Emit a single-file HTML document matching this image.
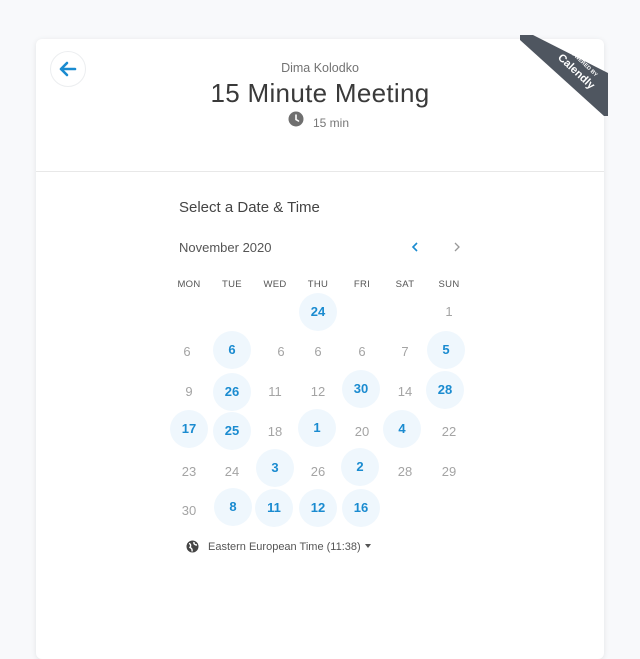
<!DOCTYPE html>
<html><head><meta charset="utf-8"><style>
*{margin:0;padding:0;box-sizing:border-box}
body{width:640px;height:640px;background:#f8f9fb;font-family:"Liberation Sans",sans-serif;position:relative;overflow:hidden}
.card{position:absolute;left:36px;top:39px;width:568px;height:620px;background:#fff;border-radius:6px;box-shadow:0 1px 6px rgba(0,0,0,.09)}
.t{position:absolute;white-space:nowrap}
.c{position:absolute;width:38px;height:38px;margin:-19px 0 0 -19px;border-radius:50%;text-align:center;line-height:38px;font-size:13px;color:#a4a4a4}
.c.a{background:#eff7fd;color:#1a8bd0;font-weight:bold}
.h{position:absolute;width:40px;margin-left:-20px;text-align:center;font-size:9.5px;color:#555;letter-spacing:.3px}
</style></head><body>
<div class="card"></div>
<div style="position:absolute;left:36px;top:171px;width:568px;height:1px;background:#e8e8e8"></div>
<div style="position:absolute;left:50px;top:51px;width:36px;height:36px;border-radius:50%;border:1px solid #eceef0;background:#fff"></div>
<svg style="position:absolute;left:57px;top:58px" width="22" height="22" viewBox="0 0 22 22"><path d="M18 11H4M10 5L4 11L10 17" stroke="#1a8bd0" stroke-width="2.6" fill="none" stroke-linecap="round" stroke-linejoin="round"/></svg>
<svg style="position:absolute;left:0;top:0" width="640" height="140"><polygon points="520,35 533,35 608,73 608,116 604,116 520,40" fill="#4f5660"/>
<text x="0" y="0" transform="translate(582,64) rotate(43)" fill="#fff" font-size="5.5" font-weight="bold" text-anchor="middle" font-family="Liberation Sans">POWERED BY</text>
<text x="0" y="0" transform="translate(574,74) rotate(43)" fill="#fff" font-size="11" font-weight="bold" text-anchor="middle" font-family="Liberation Sans">Calendly</text></svg>
<div class="t" style="left:0;width:640px;text-align:center;top:61px;font-size:12.5px;color:#737373">Dima Kolodko</div>
<div class="t" style="left:0;width:640px;text-align:center;top:78px;font-size:26px;color:#3a3a3a;letter-spacing:.3px">15 Minute Meeting</div>
<svg style="position:absolute;left:288px;top:111px" width="16" height="16" viewBox="0 0 16 16"><circle cx="8" cy="8" r="7.5" fill="#6f6f6f"/><path d="M8 4V8.5L10.5 10" stroke="#fff" stroke-width="1.6" fill="none" stroke-linecap="round"/></svg>
<div class="t" style="left:313px;top:116px;font-size:12px;color:#777">15 min</div>
<div class="t" style="left:179px;top:199px;font-size:15px;color:#444">Select a Date &amp; Time</div>
<div class="t" style="left:179px;top:240px;font-size:13px;color:#555">November 2020</div>
<svg style="position:absolute;left:408px;top:240px" width="60" height="14"><path d="M9 3L5 7L9 11" stroke="#1a8bd0" stroke-width="1.6" fill="none"/><path d="M47 3L51 7L47 11" stroke="#999" stroke-width="1.3" fill="none"/></svg>
<div class="h" style="left:189px;top:279px">MON</div><div class="h" style="left:232px;top:279px">TUE</div><div class="h" style="left:275px;top:279px">WED</div><div class="h" style="left:318px;top:279px">THU</div><div class="h" style="left:362px;top:279px">FRI</div><div class="h" style="left:405px;top:279px">SAT</div><div class="h" style="left:449px;top:279px">SUN</div>
<div class="c a" style="left:318px;top:312px">24</div><div class="c" style="left:449px;top:312px">1</div>
<div class="c" style="left:187px;top:352px">6</div><div class="c a" style="left:232px;top:350px">6</div><div class="c" style="left:281px;top:352px">6</div><div class="c" style="left:318px;top:352px">6</div><div class="c" style="left:362px;top:352px">6</div><div class="c" style="left:405px;top:352px">7</div><div class="c a" style="left:446px;top:350px">5</div>
<div class="c" style="left:189px;top:392px">9</div><div class="c a" style="left:232px;top:392px">26</div><div class="c" style="left:275px;top:392px">11</div><div class="c" style="left:318px;top:392px">12</div><div class="c a" style="left:361px;top:389px">30</div><div class="c" style="left:405px;top:392px">14</div><div class="c a" style="left:445px;top:390px">28</div>
<div class="c a" style="left:189px;top:429px">17</div><div class="c a" style="left:232px;top:431px">25</div><div class="c" style="left:275px;top:432px">18</div><div class="c a" style="left:317px;top:428px">1</div><div class="c" style="left:362px;top:432px">20</div><div class="c a" style="left:402px;top:429px">4</div><div class="c" style="left:449px;top:432px">22</div>
<div class="c" style="left:189px;top:472px">23</div><div class="c" style="left:232px;top:472px">24</div><div class="c a" style="left:275px;top:468px">3</div><div class="c" style="left:318px;top:472px">26</div><div class="c a" style="left:360px;top:467px">2</div><div class="c" style="left:405px;top:472px">28</div><div class="c" style="left:449px;top:472px">29</div>
<div class="c" style="left:189px;top:511px">30</div><div class="c a" style="left:233px;top:507px">8</div><div class="c a" style="left:274px;top:508px">11</div><div class="c a" style="left:318px;top:508px">12</div><div class="c a" style="left:361px;top:508px">16</div>
<svg style="position:absolute;left:186px;top:540px" width="13" height="13" viewBox="0 0 13 13"><circle cx="6.5" cy="6.5" r="6" fill="#444"/><path d="M3 3.5C5 4 5 6 4 7.5 5.5 8 6.5 9 6 11.5M8 2C7.5 4 9 5 11 5" stroke="#fff" stroke-width="1.4" fill="none"/></svg>
<div class="t" style="left:208px;top:541px;font-size:11px;color:#555">Eastern European Time (11:38)</div>
<svg style="position:absolute;left:365px;top:544px" width="7" height="5"><path d="M0 0H6L3 4Z" fill="#555"/></svg>
</body></html>
